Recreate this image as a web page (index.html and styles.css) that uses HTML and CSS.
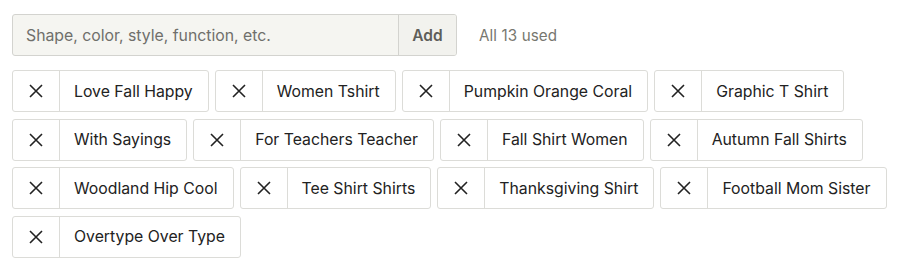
FILE: index.html
```html
<!DOCTYPE html>
<html>
<head>
<meta charset="utf-8">
<link rel="stylesheet" href="styles.css">
</head>
<body>
<div class="panel">
  <div class="entry">
    <div class="field">
      <input class="field-input" type="text" placeholder="Shape, color, style, function, etc.">
      <button class="field-add">Add</button>
    </div>
    <span class="count">All 13 used</span>
  </div>
  <ul class="tags">
    <li class="tag"><button class="tag-remove" aria-label="Remove"><svg viewBox="0 0 16 16"><path d="M2 2L14 14M14 2L2 14"/></svg></button><span class="tag-label">Love Fall Happy</span></li>
    <li class="tag"><button class="tag-remove" aria-label="Remove"><svg viewBox="0 0 16 16"><path d="M2 2L14 14M14 2L2 14"/></svg></button><span class="tag-label">Women Tshirt</span></li>
    <li class="tag"><button class="tag-remove" aria-label="Remove"><svg viewBox="0 0 16 16"><path d="M2 2L14 14M14 2L2 14"/></svg></button><span class="tag-label">Pumpkin Orange Coral</span></li>
    <li class="tag"><button class="tag-remove" aria-label="Remove"><svg viewBox="0 0 16 16"><path d="M2 2L14 14M14 2L2 14"/></svg></button><span class="tag-label">Graphic T Shirt</span></li>
    <li class="tag"><button class="tag-remove" aria-label="Remove"><svg viewBox="0 0 16 16"><path d="M2 2L14 14M14 2L2 14"/></svg></button><span class="tag-label">With Sayings</span></li>
    <li class="tag"><button class="tag-remove" aria-label="Remove"><svg viewBox="0 0 16 16"><path d="M2 2L14 14M14 2L2 14"/></svg></button><span class="tag-label">For Teachers Teacher</span></li>
    <li class="tag"><button class="tag-remove" aria-label="Remove"><svg viewBox="0 0 16 16"><path d="M2 2L14 14M14 2L2 14"/></svg></button><span class="tag-label">Fall Shirt Women</span></li>
    <li class="tag"><button class="tag-remove" aria-label="Remove"><svg viewBox="0 0 16 16"><path d="M2 2L14 14M14 2L2 14"/></svg></button><span class="tag-label">Autumn Fall Shirts</span></li>
    <li class="tag"><button class="tag-remove" aria-label="Remove"><svg viewBox="0 0 16 16"><path d="M2 2L14 14M14 2L2 14"/></svg></button><span class="tag-label">Woodland Hip Cool</span></li>
    <li class="tag"><button class="tag-remove" aria-label="Remove"><svg viewBox="0 0 16 16"><path d="M2 2L14 14M14 2L2 14"/></svg></button><span class="tag-label">Tee Shirt Shirts</span></li>
    <li class="tag"><button class="tag-remove" aria-label="Remove"><svg viewBox="0 0 16 16"><path d="M2 2L14 14M14 2L2 14"/></svg></button><span class="tag-label">Thanksgiving Shirt</span></li>
    <li class="tag"><button class="tag-remove" aria-label="Remove"><svg viewBox="0 0 16 16"><path d="M2 2L14 14M14 2L2 14"/></svg></button><span class="tag-label">Football Mom Sister</span></li>
    <li class="tag"><button class="tag-remove" aria-label="Remove"><svg viewBox="0 0 16 16"><path d="M2 2L14 14M14 2L2 14"/></svg></button><span class="tag-label">Overtype Over Type</span></li>
  </ul>
</div>
</body>
</html>
```
FILE: styles.css
```css
* { box-sizing: border-box; }
html, body { margin: 0; padding: 0; background: #fff; }
body {
  font-family: Inter, "Noto Sans", "Liberation Sans", sans-serif;
  color: #222;
}
.panel {
  padding: 14px 12px 0 12px;
  width: 900px;
}
.entry {
  display: flex;
  align-items: center;
  gap: 22px;
  margin-bottom: 14px;
}
.field {
  display: flex;
  height: 42px;
  border: 1px solid #d3d3cf;
  border-radius: 3px;
  background: #f5f5f1;
  overflow: hidden;
}
.field-input {
  width: 385px;
  border: 0;
  outline: none;
  background: transparent;
  padding: 0 13px;
  font: inherit;
  font-size: 15.8px;
  color: #222;
}
.field-input::placeholder { color: #6f6f6b; }
.field-add {
  width: 58px;
  border: 0;
  border-left: 1px solid #d3d3cf;
  background: #f2f2ee;
  font: inherit;
  font-size: 15.5px;
  font-weight: 600;
  color: #5e5e5a;
  padding: 0;
}
.count {
  font-size: 15.2px;
  color: #77776f;
  letter-spacing: 0.1px;
}
.tags {
  list-style: none;
  margin: 0;
  padding: 0;
  display: flex;
  flex-wrap: wrap;
  gap: 6.6px 6px;
  width: 878px;
}
.tag {
  display: flex;
  height: 42px;
  border: 1px solid #dcdcd8;
  border-radius: 3px;
  background: #fff;
}
.tag-remove {
  width: 47px;
  border: 0;
  border-right: 1px solid #dcdcd8;
  background: transparent;
  padding: 0;
  display: flex;
  align-items: center;
  justify-content: center;
}
.tag-remove svg {
  width: 16px;
  height: 16px;
  fill: none;
  stroke: #222;
  stroke-width: 1.6;
}
.tag-label {
  display: flex;
  align-items: center;
  padding: 0 15px 0 14px;
  font-size: 15.8px;
  color: #222;
}
```
